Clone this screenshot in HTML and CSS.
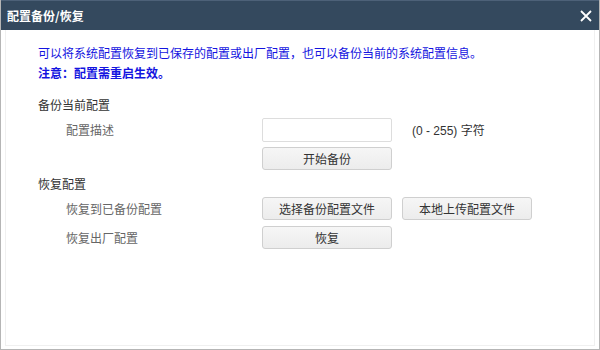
FILE: index.html
```html
<!DOCTYPE html>
<html lang="zh-CN">
<head>
	<meta charset="UTF-8">
	<title>配置备份/恢复</title>
	<link rel="stylesheet" href="styles.css">
</head>
<body>
	<div class="dialog">
		<div class="dlgHead">
			<span class="dlgTitle">配置备份/恢复</span>
			<a href="javascript:;" class="dlgClose">
				<svg width="12" height="12" viewBox="0 0 12 12"><path d="M1 1L11 11M11 1L1 11" stroke="#fff" stroke-width="1.8" fill="none"/></svg>
			</a>
		</div>
		<div class="dlgBody">
			<p class="tip">可以将系统配置恢复到已保存的配置或出厂配置，也可以备份当前的系统配置信息。</p>
			<p class="tip strong">注意：配置需重启生效。</p>

			<h3 class="secTitle backupTitle">备份当前配置</h3>
			<div class="row">
				<label class="rowLabel">配置描述</label>
				<input type="text" class="txt">
				<span class="hint">(0 - 255) 字符</span>
			</div>
			<div class="row row2">
				<span class="rowLabel"></span>
				<button class="btn">开始备份</button>
			</div>

			<h3 class="secTitle">恢复配置</h3>
			<div class="row">
				<span class="rowLabel">恢复到已备份配置</span>
				<button class="btn">选择备份配置文件</button>
				<button class="btn">本地上传配置文件</button>
			</div>
			<div class="row row2">
				<span class="rowLabel">恢复出厂配置</span>
				<button class="btn">恢复</button>
			</div>
		</div>
	</div>
</body>
</html>
```

FILE: styles.css
```css
*{
	box-sizing: border-box;
}
body{
	margin:0;
	font-family: "Noto Sans CJK SC", "Microsoft YaHei", sans-serif;
	font-size:12px;
	color:#333;
}
p,h3{
	margin:0;
}
.dialog{
	width:600px;
	height:350px;
	border:1px solid #b5b5b5;
	border-top:none;
	background:#fff;
	display:flex;
	flex-direction:column;
}
.dlgHead{
	height:30px;
	background:#34495e;
	border-top:1px solid #4d6178;
	display:flex;
	align-items:center;
	justify-content:space-between;
	padding:0 5px 0 6px;
}
.dlgTitle{
	color:#fff;
	font-weight:bold;
	font-size:12px;
}
.dlgClose{
	display:flex;
	width:16px;
	height:16px;
	align-items:center;
	justify-content:center;
}
.dlgBody{
	flex:1;
	margin:0 4px 3px 4px;
	border:1px solid #f0f0f0;
	border-top:none;
	padding:13px 0 0 32px;
}
.tip{
	color:#1414e0;
	line-height:20px;
}
.tip.strong{
	font-weight:bold;
}
.secTitle{
	font-size:12px;
	font-weight:normal;
	color:#333;
	line-height:20px;
	margin-top:4px;
}
.backupTitle{
	margin-top:12px;
}
.row{
	display:flex;
	align-items:center;
	height:23px;
	margin-top:3px;
}
.row2{
	margin-top:6px;
}
.rowLabel{
	width:224px;
	padding-left:28px;
	color:#666;
}
.txt{
	width:130px;
	height:24px;
	border:1px solid #ddd;
	border-radius:2px;
	padding:0 4px;
	font-size:12px;
	outline:none;
}
.hint{
	margin-left:20px;
	color:#333;
	font-family: "Liberation Sans", "Noto Sans CJK SC", sans-serif;
}
.btn{
	width:130px;
	height:23px;
	border:1px solid #cfcfcf;
	border-radius:3px;
	background:linear-gradient(#f6f6f6,#ececec);
	font-family: "Noto Sans CJK SC", sans-serif;
	font-size:12px;
	color:#333;
	padding:0;
	margin-right:10px;
}
```
